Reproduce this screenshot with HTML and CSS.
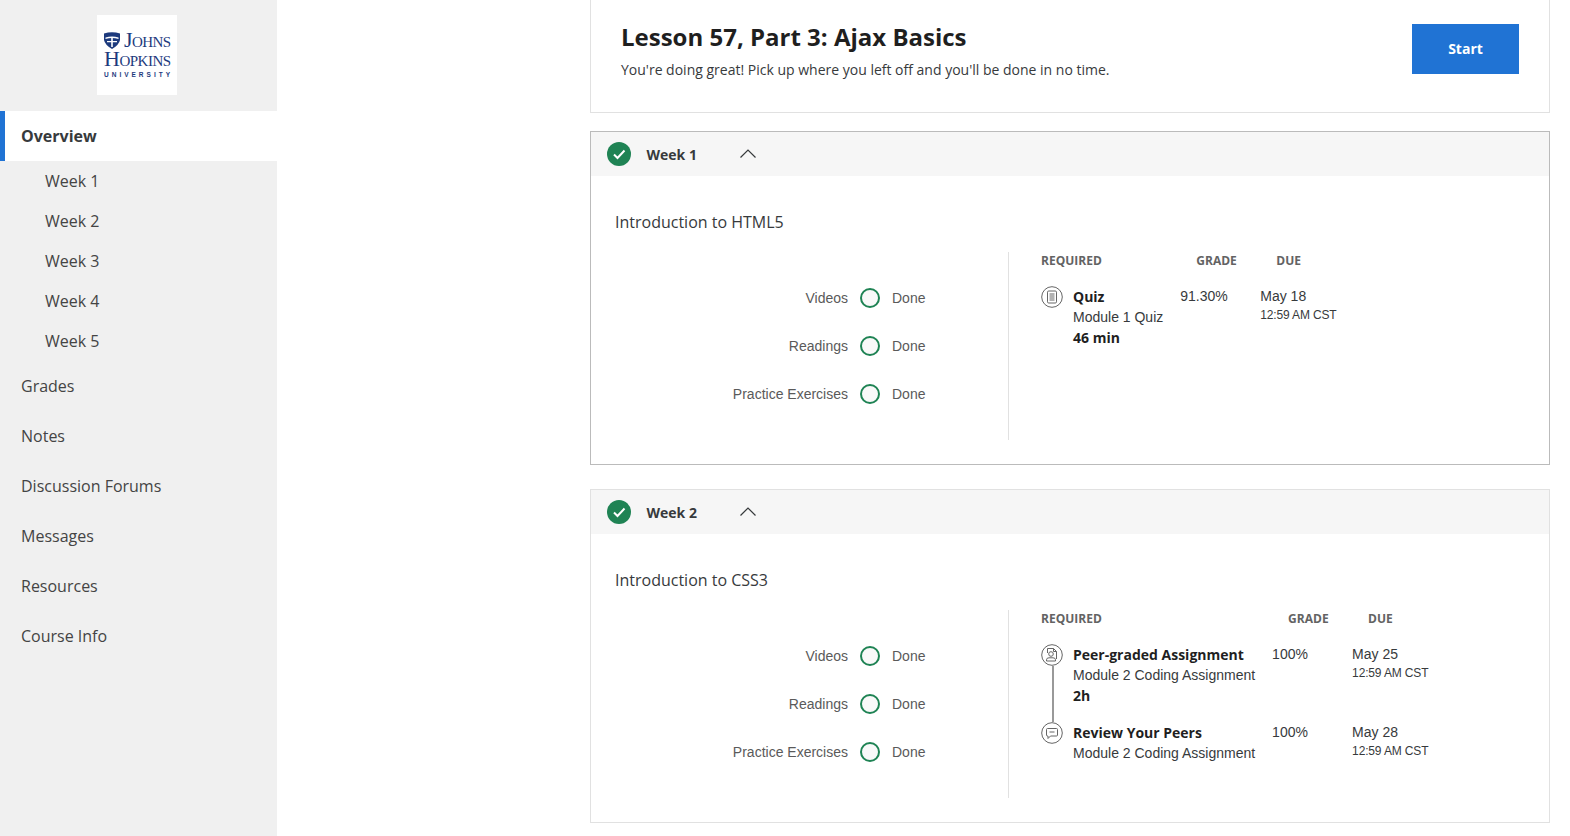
FILE: index.html
```html
<!DOCTYPE html>
<html lang="en">
<head>
<meta charset="utf-8">
<title>Ajax Basics</title>
<link rel="stylesheet" href="styles.css">
</head>
<body>
<div class="page">
  <aside class="sidebar">
    <div class="logo-wrap">
      <div class="logo">
        <div class="logo-top">
          <svg class="shield" viewBox="0 0 16 17" aria-hidden="true"><path d="M0 1.5 Q8 -1 16 1.5 V8 Q15 13 8 17 Q1 13 0 8Z" fill="#1d3a7d"/><path d="M1.5 5.5 Q8 3.5 14.5 5.5 V7 Q8 5 1.5 7Z" fill="#fff"/><path d="M7.2 6 H8.8 V15 H7.2Z M3 9 H13 V10.2 H3Z" fill="#fff"/></svg>
          <span class="logo-word logo-johns">Johns</span>
        </div>
        <span class="logo-word logo-hopkins">Hopkins</span>
        <span class="logo-uni">UNIVERSITY</span>
      </div>
    </div>
    <nav>
      <a class="nav-item nav-active">Overview</a>
      <a class="nav-sub">Week 1</a>
      <a class="nav-sub">Week 2</a>
      <a class="nav-sub">Week 3</a>
      <a class="nav-sub">Week 4</a>
      <a class="nav-sub">Week 5</a>
      <a class="nav-item">Grades</a>
      <a class="nav-item">Notes</a>
      <a class="nav-item">Discussion Forums</a>
      <a class="nav-item">Messages</a>
      <a class="nav-item">Resources</a>
      <a class="nav-item">Course Info</a>
    </nav>
  </aside>
  <main class="main">
    <section class="hero">
      <div class="hero-text">
        <h1 class="hero-title">Lesson 57, Part 3: Ajax Basics</h1>
        <p class="hero-sub">You're doing great! Pick up where you left off and you'll be done in no time.</p>
      </div>
      <button class="start">Start</button>
    </section>

    <section class="week week-focus">
      <header class="week-head">
        <svg class="check" viewBox="0 0 24 24" aria-hidden="true"><circle cx="12" cy="12" r="12" fill="#1f8354"/><path d="M7 12.5 L10.5 16 L17.5 8.5" fill="none" stroke="#fff" stroke-width="2"/></svg>
        <span class="week-name">Week 1</span>
        <svg class="chev" viewBox="0 0 16 9" aria-hidden="true"><path d="M0.5 8.5 L8 1 L15.5 8.5" fill="none" stroke="#373a3c" stroke-width="1.2"/></svg>
      </header>
      <div class="week-body">
        <h2 class="week-title">Introduction to HTML5</h2>
        <div class="week-panels">
          <div class="progress">
            <span class="p-label">Videos</span><span class="ring"></span><span class="p-done">Done</span>
            <span class="p-label">Readings</span><span class="ring"></span><span class="p-done">Done</span>
            <span class="p-label">Practice Exercises</span><span class="ring"></span><span class="p-done">Done</span>
          </div>
          <div class="req">
            <span class="req-head">Required</span><span class="req-head req-pad">Grade</span><span class="req-head req-pad">Due</span>
            <div class="item">
              <div class="item-rail">
                <svg class="item-icon" viewBox="0 0 22 22" aria-hidden="true"><circle cx="11" cy="11" r="10.3" fill="none" stroke="#666" stroke-width="1"/><rect x="6.5" y="5" width="9" height="12" rx="1.2" fill="none" stroke="#666"/><path d="M8.5 8 H13.5 M8.5 10 H13.5 M8.5 12 H13.5 M8.5 14 H13.5" stroke="#666"/></svg>
              </div>
              <div class="item-text"><strong>Quiz</strong><span>Module 1 Quiz</span><strong class="item-meta">46 min</strong></div>
            </div>
            <span class="grade">91.30%</span>
            <div class="due"><span class="due-date">May 18</span><span class="due-time">12:59 AM CST</span></div>
          </div>
        </div>
      </div>
    </section>

    <section class="week">
      <header class="week-head">
        <svg class="check" viewBox="0 0 24 24" aria-hidden="true"><circle cx="12" cy="12" r="12" fill="#1f8354"/><path d="M7 12.5 L10.5 16 L17.5 8.5" fill="none" stroke="#fff" stroke-width="2"/></svg>
        <span class="week-name">Week 2</span>
        <svg class="chev" viewBox="0 0 16 9" aria-hidden="true"><path d="M0.5 8.5 L8 1 L15.5 8.5" fill="none" stroke="#373a3c" stroke-width="1.2"/></svg>
      </header>
      <div class="week-body">
        <h2 class="week-title">Introduction to CSS3</h2>
        <div class="week-panels">
          <div class="progress">
            <span class="p-label">Videos</span><span class="ring"></span><span class="p-done">Done</span>
            <span class="p-label">Readings</span><span class="ring"></span><span class="p-done">Done</span>
            <span class="p-label">Practice Exercises</span><span class="ring"></span><span class="p-done">Done</span>
          </div>
          <div class="req">
            <span class="req-head">Required</span><span class="req-head req-pad">Grade</span><span class="req-head req-pad">Due</span>
            <div class="item item-gap">
              <div class="item-rail">
                <svg class="item-icon" viewBox="0 0 22 22" aria-hidden="true"><circle cx="11" cy="11" r="10.3" fill="none" stroke="#666" stroke-width="1"/><path d="M6.5 9 V4.5 H12.5 L15.5 7.5 V15" fill="none" stroke="#666"/><path d="M12.5 4.5 V7.5 H15.5" fill="none" stroke="#666"/><circle cx="10" cy="10" r="2.3" fill="none" stroke="#666"/><path d="M5.5 17 V15.8 Q5.5 13.8 8 13.8 H12 Q14.5 13.8 14.5 15.8 V17 Z" fill="none" stroke="#666"/></svg>
                <span class="rail-line"></span>
              </div>
              <div class="item-text"><strong>Peer-graded Assignment</strong><span>Module 2 Coding Assignment</span><strong class="item-meta">2h</strong></div>
            </div>
            <span class="grade">100%</span>
            <div class="due"><span class="due-date">May 25</span><span class="due-time">12:59 AM CST</span></div>
            <div class="item">
              <div class="item-rail">
                <svg class="item-icon" viewBox="0 0 22 22" aria-hidden="true"><circle cx="11" cy="11" r="10.3" fill="none" stroke="#666" stroke-width="1"/><path d="M5.5 7.5 Q5.5 6.5 6.5 6.5 H15.5 Q16.5 6.5 16.5 7.5 V13 Q16.5 14 15.5 14 H9.5 L7 16.5 V14 H6.5 Q5.5 14 5.5 13Z" fill="none" stroke="#666"/><path d="M8.5 10 H13.5" stroke="#666"/></svg>
              </div>
              <div class="item-text"><strong>Review Your Peers</strong><span>Module 2 Coding Assignment</span></div>
            </div>
            <span class="grade">100%</span>
            <div class="due"><span class="due-date">May 28</span><span class="due-time">12:59 AM CST</span></div>
          </div>
        </div>
      </div>
    </section>
  </main>
</div>
</body>
</html>
```
FILE: styles.css
```css
* { box-sizing: border-box; }
html, body { margin: 0; padding: 0; }
body {
  background: #fff;
  color: #373a3c;
  font-family: "Open Sans", "Liberation Sans", sans-serif;
  height: 836px;
  overflow: hidden;
}
.page { display: flex; min-height: 836px; }

.sidebar { width: 277px; flex: none; background: #f0f0f0; }
.logo-wrap { height: 111px; padding: 15px 3px 0 0; display: flex; justify-content: center; }
.logo {
  width: 80px; height: 80px; background: #fff; color: #1d3a7d;
  padding: 16px 7px 0; display: flex; flex-direction: column;
  font-family: "Liberation Serif", serif;
}
.logo-top { display: flex; align-items: center; gap: 4px; height: 18px; }
.shield { width: 16px; height: 17px; flex: none; }
.logo-word { font-variant: small-caps; text-transform: capitalize; display: block; line-height: 18px; white-space: nowrap; }
.logo-johns { font-size: 22px; letter-spacing: -0.6px; }
.logo-hopkins { font-size: 22px; letter-spacing: -0.5px; margin-top: 1px; }
.logo-uni {
  font-family: "Liberation Sans", sans-serif; font-weight: 700; font-size: 6.5px;
  letter-spacing: 3px; line-height: 8px; margin-top: 3px; white-space: nowrap;
}

.nav-item, .nav-sub { display: flex; align-items: center; font-size: 16px; color: #444; }
.nav-item { height: 50px; padding-left: 21px; }
.nav-sub { height: 40px; padding-left: 45px; }
.nav-active {
  background: #fff; font-weight: 700; color: #373a3c;
  border-left: 5px solid #2073d4; padding-left: 16px;
}

.main { width: 960px; margin-left: 313px; flex: none; }
.hero {
  height: 113px; border: 1px solid #e1e1e1; border-top: 0;
  padding: 24px 30px 24px 30px; display: flex; justify-content: space-between; align-items: flex-start;
}
.hero-title { margin: -1px 0 0; font-size: 24px; line-height: 28px; font-weight: 700; color: #1f1f1f; }
.hero-sub { margin: 9px 0 0; font-size: 14px; line-height: 20px; color: #373a3c; }
.start {
  width: 107px; height: 50px; border: 0; background: #2073d4; color: #fff;
  font: 700 14px/48px "Open Sans", sans-serif; padding: 0;
}

.week { height: 334px; border: 1px solid #e1e1e1; margin-top: 24px; }
.week-focus { border-color: #bbb; margin-top: 18px; }
.week-head {
  height: 44px; background: #f6f6f6; display: flex; align-items: center; padding-left: 16px;
}
.check { width: 24px; height: 24px; flex: none; }
.week-name { margin-left: 15.5px; width: 93.5px; font-size: 14px; font-weight: 700; color: #373a3c; }
.chev { width: 16px; height: 9px; flex: none; margin-top: -1px; }
.week-body { padding: 36px 24px 0; }
.week-title { margin: 0; font-size: 16px; line-height: 20px; font-weight: 400; color: #373a3c; }
.week-panels { display: flex; margin-top: 20px; height: 188px; }

.progress {
  width: 393px; flex: none; padding-top: 22px;
  display: grid; grid-template-columns: 233px 22px auto; column-gap: 11px;
  grid-auto-rows: 48px; align-items: center;
  font-family: "Liberation Sans", sans-serif; font-size: 14px; color: #5a5a5a;
}
.p-label { text-align: right; }
.ring { width: 20px; height: 20px; justify-self: center; border: 2px solid #1f8354; border-radius: 50%; background: #f9f9f9; }

.req {
  border-left: 1px solid #e1e1e1; padding-left: 32px; flex: 1;
  display: grid; grid-template-columns: max-content 80px 1fr; column-gap: 0;
  align-content: start;
}
.req-head {
  font-size: 12px; line-height: 18px; font-weight: 700; text-transform: uppercase;
  color: #636363; margin-bottom: 16px;
}
.req-pad { padding-left: 16px; }
.item { display: flex; padding-right: 17px; }
.item-rail { width: 22px; flex: none; margin-right: 10px; display: flex; flex-direction: column; align-items: center; }
.item-icon { width: 22px; height: 22px; flex: none; }
.rail-line { width: 2px; flex: 1; background: #999; margin-left: 1px; }
.item-gap .item-text { padding-bottom: 16px; }
.item-text { display: flex; flex-direction: column; line-height: 21px; font-size: 14px; }
.item-text strong { font-weight: 700; color: #1f1f1f; }
.item-text .item-meta { margin-top: -1px; }
.item-text span { font-family: "Liberation Sans", sans-serif; color: #373a3c; }
.grade, .due-date { font-family: "Liberation Sans", sans-serif; font-size: 14px; line-height: 20px; color: #373a3c; }
.due { display: flex; flex-direction: column; }
.due-time { font-family: "Liberation Sans", sans-serif; font-size: 12px; line-height: 16px; margin-top: 1px; color: #373a3c; letter-spacing: -0.15px; }
```
